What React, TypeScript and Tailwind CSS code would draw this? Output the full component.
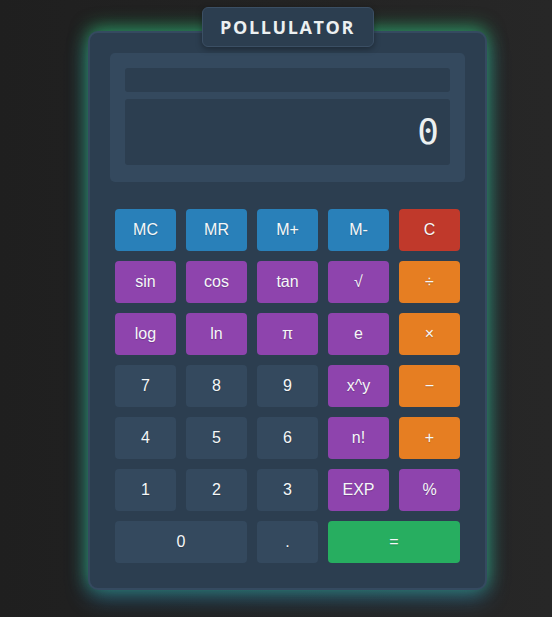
import React from "react";

type Btn = { label: string; kind: "mem" | "clear" | "fn" | "op" | "num" | "eq"; span?: number };

const rows: Btn[] = [
  { label: "MC", kind: "mem" },
  { label: "MR", kind: "mem" },
  { label: "M+", kind: "mem" },
  { label: "M-", kind: "mem" },
  { label: "C", kind: "clear" },
  { label: "sin", kind: "fn" },
  { label: "cos", kind: "fn" },
  { label: "tan", kind: "fn" },
  { label: "√", kind: "fn" },
  { label: "÷", kind: "op" },
  { label: "log", kind: "fn" },
  { label: "ln", kind: "fn" },
  { label: "π", kind: "fn" },
  { label: "e", kind: "fn" },
  { label: "×", kind: "op" },
  { label: "7", kind: "num" },
  { label: "8", kind: "num" },
  { label: "9", kind: "num" },
  { label: "x^y", kind: "fn" },
  { label: "−", kind: "op" },
  { label: "4", kind: "num" },
  { label: "5", kind: "num" },
  { label: "6", kind: "num" },
  { label: "n!", kind: "fn" },
  { label: "+", kind: "op" },
  { label: "1", kind: "num" },
  { label: "2", kind: "num" },
  { label: "3", kind: "num" },
  { label: "EXP", kind: "fn" },
  { label: "%", kind: "fn" },
  { label: "0", kind: "num", span: 2 },
  { label: ".", kind: "num" },
  { label: "=", kind: "eq", span: 2 },
];

const kindClass: Record<Btn["kind"], string> = {
  mem: "bg-[#2980b9]",
  clear: "bg-[#c0392b]",
  fn: "bg-[#8e44ad]",
  op: "bg-[#e67e22]",
  num: "bg-[#34495e]",
  eq: "bg-[#27ae60]",
};

export default function App() {
  return (
    <div className="w-full h-[617px] overflow-hidden bg-linear-to-r from-[#1f1f1f] to-[#272727] pl-[88px] pt-[31px]">
      <div className="relative w-[399px] rounded-[10px] border-2 border-[#354a60] bg-[#2c3e50] p-[20px] shadow-[0_-4px_18px_rgba(46,204,113,0.6),0_8px_22px_rgba(52,152,219,0.45)]">
        <div className="absolute left-1/2 top-[-26px] -translate-x-1/2 h-[40px] w-[172px] flex items-center justify-center rounded-[6px] border border-[#3b4f64] bg-[#2c3e50] shadow-[0_2px_6px_rgba(0,0,0,0.35)]">
          <span className="text-[18px] font-bold tracking-[1.6px] text-[#ecf0f1] [font-family:'Open_Sans',sans-serif]">
            POLLULATOR
          </span>
        </div>

        <div className="mb-[22px] rounded-[5px] bg-[#34495e] px-[15px] pt-[15px] pb-[17px]">
          <div className="h-[24px] rounded-[3px] bg-[#2c3e50]" />
          <div className="mt-[7px] h-[66px] rounded-[3px] bg-[#2c3e50] flex items-center justify-end pr-[11px]">
            <span className="text-[36px] leading-none text-[#ecf0f1] [font-family:'DejaVu_Sans_Mono',monospace]">0</span>
          </div>
        </div>

        <div className="grid grid-cols-5 gap-[10px] p-[5px]">
          {rows.map((b, i) => (
            <div
              key={i}
              className={`${kindClass[b.kind]} ${b.span === 2 ? "col-span-2" : ""} h-[42px] rounded-[4px] flex items-center justify-center text-[16px] text-[#f5f7f8] [font-family:'Liberation_Sans',Arial,sans-serif] [text-shadow:0_1px_1px_rgba(0,0,0,0.2)]`}
            >
              {b.label}
            </div>
          ))}
        </div>
      </div>
    </div>
  );
}
